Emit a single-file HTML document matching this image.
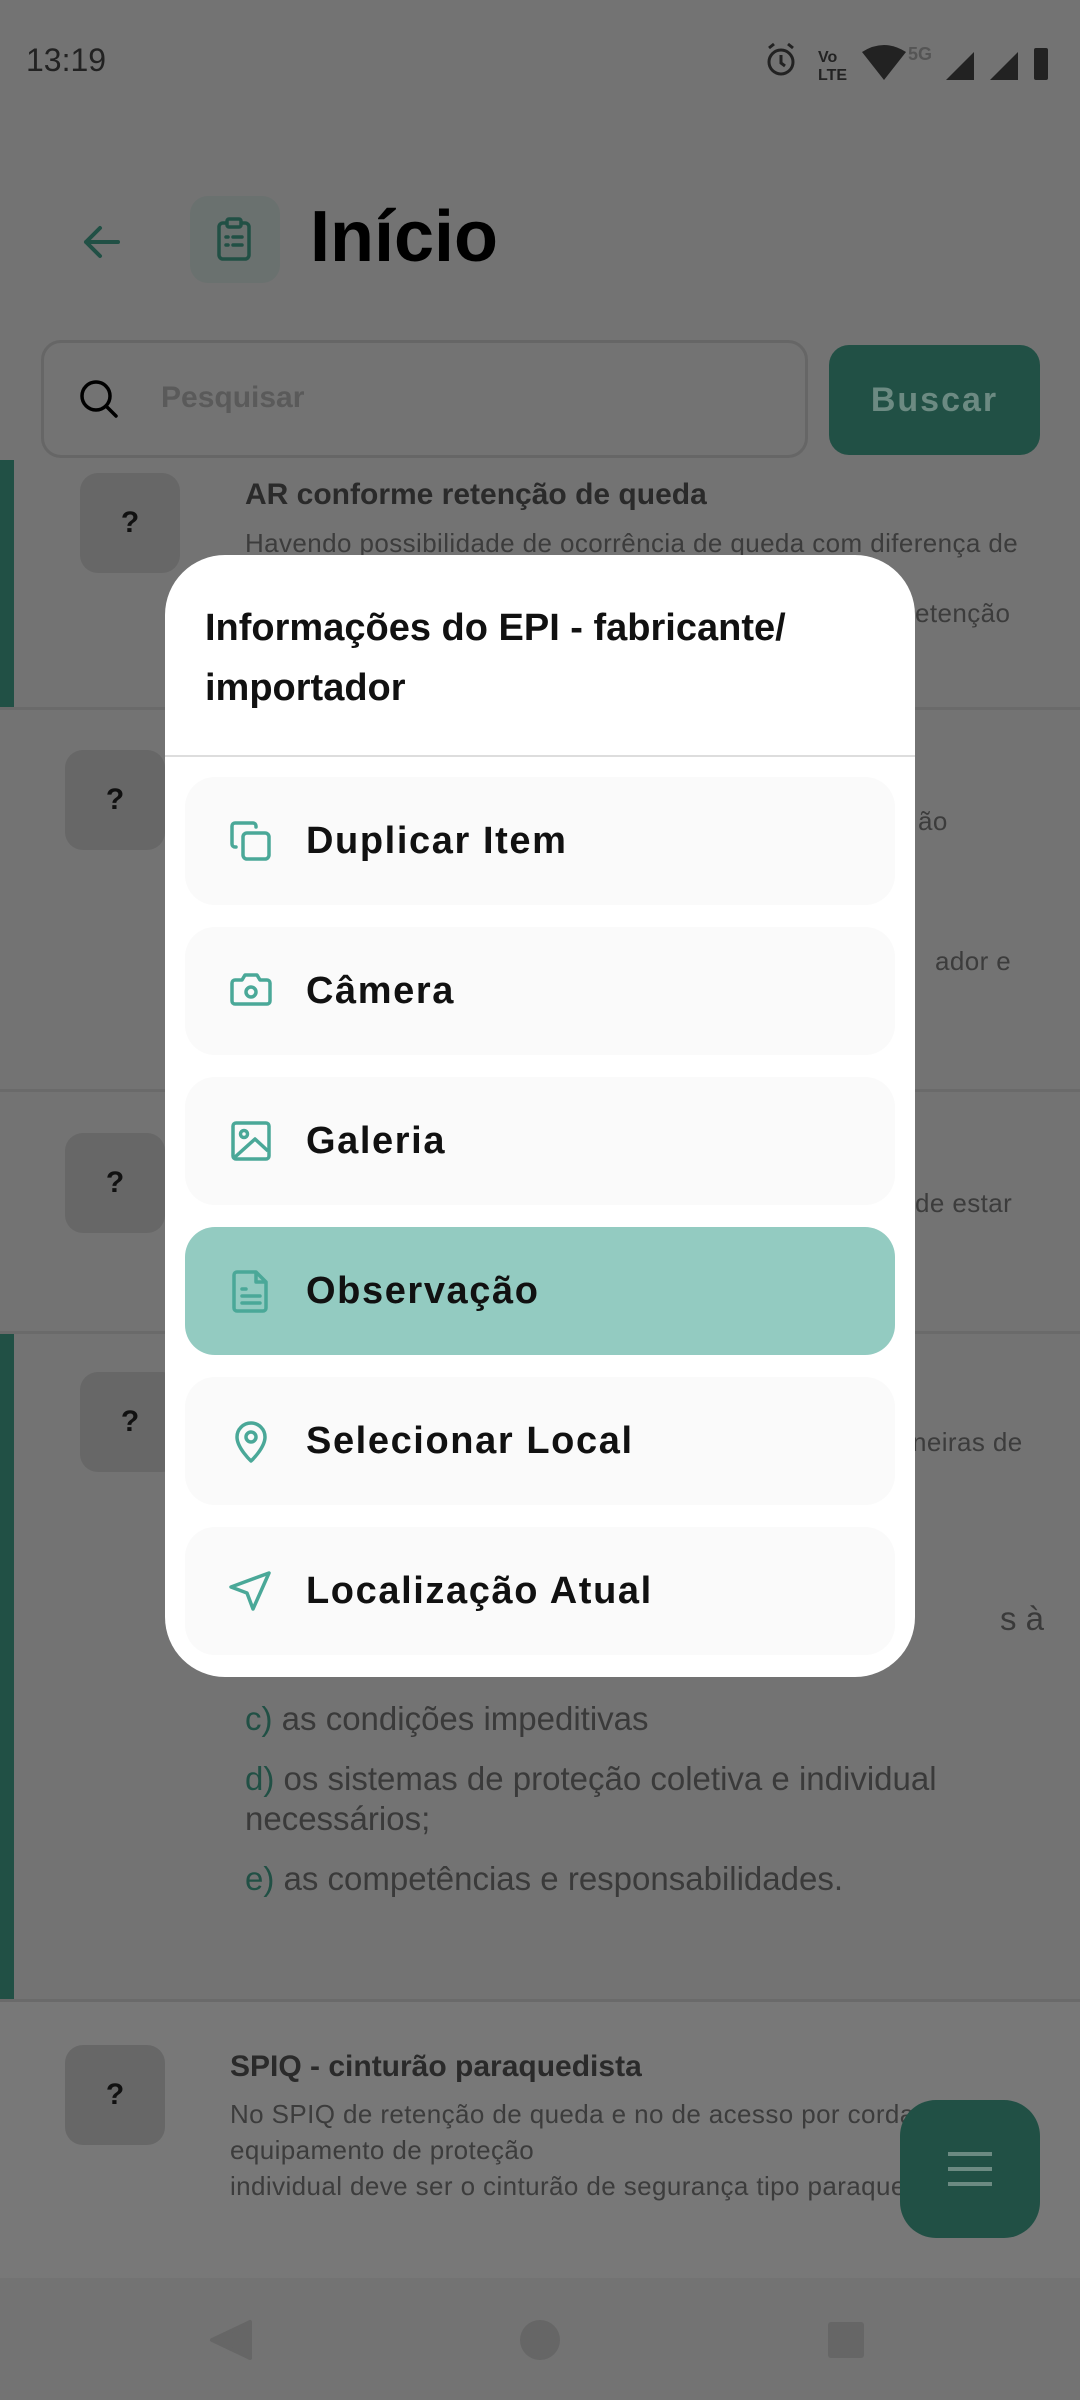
<!DOCTYPE html>
<html><head><meta charset="utf-8"><style>
*{margin:0;padding:0;box-sizing:border-box}
body{width:1080px;height:2400px;position:relative;overflow:hidden;background:#737373;font-family:"Liberation Sans",sans-serif}
.a{position:absolute;white-space:nowrap}
.q{position:absolute;width:100px;height:100px;border-radius:18px;background:#676767;color:#111;font-weight:bold;font-size:30px;display:flex;align-items:center;justify-content:center}
.t{position:absolute;color:#2a2a2a;font-size:30px;font-weight:bold;white-space:nowrap}
.d{position:absolute;color:#3c3c3c;font-size:26px;letter-spacing:0.4px;line-height:36px;white-space:nowrap}
.big{position:absolute;color:#3a3a3a;font-size:33px;left:245px;white-space:nowrap}
.big b{color:#215045;font-weight:normal}
.line{position:absolute;left:0;width:1080px;height:3px;background:#6a6a6a}
.item{position:absolute;left:185px;width:710px;height:128px;border-radius:30px;background:#fafafa;display:flex;align-items:center}
.item svg{position:absolute;left:42px;top:40px}
.item span{position:absolute;left:121px;font-size:38px;font-weight:bold;color:#111;letter-spacing:1.6px}
</style></head><body>
<div class="a" style="left:26px;top:42px;font-size:32px;color:#222">13:19</div>
<svg class="a" style="left:760px;top:40px" width="300" height="44" viewBox="0 0 300 44">
<circle cx="21" cy="22" r="12" fill="none" stroke="#222" stroke-width="3"/><path d="M21 15v8l4 3M9 8l5-4M33 8l-5-4" stroke="#222" stroke-width="3" fill="none"/>
<text x="58" y="22" font-size="16" font-weight="bold" fill="#222" font-family="Liberation Sans">Vo</text><text x="58" y="40" font-size="16" font-weight="bold" fill="#222" font-family="Liberation Sans">LTE</text>
<path d="M102 12q22-14 44 0l-22 28z" fill="#222"/>
<text x="148" y="20" font-size="18" font-weight="bold" fill="#555" font-family="Liberation Sans">5G</text>
<path d="M186 40l28-28v28z" fill="#222"/><path d="M230 40l28-28v28z" fill="#222"/>
<rect x="274" y="8" width="14" height="32" rx="2" fill="#222"/>
</svg>
<svg class="a" style="left:78px;top:218px" width="48" height="48" viewBox="0 0 48 48"><path d="M40 24H8M22 10L8 24l14 14" stroke="#215045" stroke-width="4" fill="none" stroke-linecap="round" stroke-linejoin="round"/></svg>
<div class="a" style="left:190px;top:196px;width:90px;height:87px;border-radius:18px;background:#6a716f"></div>
<svg class="a" style="left:213px;top:217px" width="44" height="48" viewBox="0 0 44 48"><rect x="6" y="6" width="30" height="36" rx="4" fill="none" stroke="#215045" stroke-width="3.5"/><rect x="14" y="2" width="14" height="8" rx="2" fill="#6a716f" stroke="#215045" stroke-width="3.5"/><path d="M13 20h2M20 20h9M13 28h2M20 28h9" stroke="#215045" stroke-width="3.5" stroke-linecap="round"/></svg>
<div class="a" style="left:310px;top:196px;font-size:72px;font-weight:bold;color:#000">Início</div>
<div class="a" style="left:41px;top:340px;width:767px;height:118px;border:3px solid #666;border-radius:20px"></div>
<svg class="a" style="left:78px;top:378px" width="42" height="42" viewBox="0 0 42 42"><circle cx="18" cy="18" r="14" fill="none" stroke="#000" stroke-width="3.5"/><path d="M28 28l10 10" stroke="#000" stroke-width="3.5" stroke-linecap="round"/></svg>
<div class="a" style="left:161px;top:381px;font-size:30px;font-weight:bold;color:#5a5a5a">Pesquisar</div>
<div class="a" style="left:829px;top:345px;width:211px;height:110px;border-radius:20px;background:#215045;color:#6c8a82;font-size:34px;font-weight:bold;letter-spacing:2px;display:flex;align-items:center;justify-content:center">Buscar</div>

<div class="a" style="left:0;top:460px;width:14px;height:248px;background:#215045"></div>
<div class="a" style="left:0;top:1333px;width:14px;height:667px;background:#215045"></div>
<div class="line" style="top:707px"></div><div class="line" style="top:1089px"></div><div class="line" style="top:1331px"></div><div class="line" style="top:1999px"></div>
<div class="a" style="left:0;top:2002px;width:1080px;height:276px;background:#787878"></div>
<div class="q" style="left:80px;top:473px">?</div>
<div class="q" style="left:65px;top:750px">?</div>
<div class="q" style="left:65px;top:1133px">?</div>
<div class="q" style="left:80px;top:1372px">?</div>
<div class="q" style="left:65px;top:2045px">?</div>
<div class="t" style="left:245px;top:478px">AR conforme retenção de queda</div>
<div class="d" style="left:245px;top:525px">Havendo possibilidade de ocorrência de queda com diferença de</div>
<div class="d" style="left:915px;top:595px">etenção</div>
<div class="d" style="left:918px;top:803px">ão</div>
<div class="d" style="left:935px;top:943px">ador e</div>
<div class="d" style="left:915px;top:1185px">de estar</div>
<div class="d" style="left:912px;top:1424px">neiras de</div>
<div class="big" style="left:1000px;top:1600px">s à</div>
<div class="big" style="top:1700px"><b>c)</b> as condições impeditivas</div>
<div class="big" style="top:1760px"><b>d)</b> os sistemas de proteção coletiva e individual</div>
<div class="big" style="top:1800px">necessários;</div>
<div class="big" style="top:1860px"><b>e)</b> as competências e responsabilidades.</div>
<div class="t" style="left:230px;top:2050px">SPIQ - cinturão paraquedista</div>
<div class="d" style="left:230px;top:2096px">No SPIQ de retenção de queda e no de acesso por corda<br>equipamento de proteção<br>individual deve ser o cinturão de segurança tipo paraquedista</div>
<div class="a" style="left:900px;top:2100px;width:140px;height:138px;border-radius:36px;background:#215045"></div>
<svg class="a" style="left:946px;top:2150px" width="48" height="38"><path d="M2 4h44M2 19h44M2 34h44" stroke="#6c8a82" stroke-width="4"/></svg>
<svg class="a" style="left:200px;top:2310px" width="680" height="60"><path d="M50 12v36L12 30z" fill="#666" stroke="#666" stroke-width="4" stroke-linejoin="round"/><circle cx="340" cy="30" r="20" fill="#666"/><rect x="628" y="12" width="36" height="36" rx="3" fill="#666"/></svg>

<div class="a" style="left:165px;top:555px;width:750px;height:1122px;background:#fff;border-radius:60px"></div>
<div class="a" style="left:205px;top:598px;font-size:38px;font-weight:bold;color:#111;line-height:60px">Informações do EPI - fabricante/<br>importador</div>
<div class="a" style="left:165px;top:755px;width:750px;height:2px;background:#ddd"></div>

<div class="item" style="top:777px"><svg width="48" height="48" viewBox="0 0 48 48" fill="none" stroke="#4aa898" stroke-width="3.5" stroke-linecap="round" stroke-linejoin="round"><rect x="16" y="16" width="26" height="26" rx="4"/><path d="M9 30H8a3 3 0 0 1-3-3V9a3 3 0 0 1 3-3h18a3 3 0 0 1 3 3v1"/></svg><span>Duplicar Item</span></div>
<div class="item" style="top:927px"><svg width="48" height="48" viewBox="0 0 48 48" fill="none" stroke="#4aa898" stroke-width="3.5" stroke-linejoin="round"><path d="M5 16a3 3 0 0 1 3-3h7l3-5h12l3 5h7a3 3 0 0 1 3 3v18a3 3 0 0 1-3 3H8a3 3 0 0 1-3-3z"/><circle cx="24" cy="25" r="5"/></svg><span>Câmera</span></div>
<div class="item" style="top:1077px"><svg width="48" height="48" viewBox="0 0 48 48" fill="none" stroke="#4aa898" stroke-width="3.5" stroke-linejoin="round"><rect x="6" y="6" width="36" height="36" rx="3"/><circle cx="17" cy="17" r="3.5"/><path d="M8 40l20-18 13 12"/></svg><span>Galeria</span></div>
<div class="item" style="top:1227px;background:#93cbc1"><svg width="48" height="48" viewBox="0 0 48 48" fill="none" stroke="#4aa898" stroke-width="3.5" stroke-linejoin="round" stroke-linecap="round"><path d="M10 5h19l10 10v26a3 3 0 0 1-3 3H10a3 3 0 0 1-3-3V8a3 3 0 0 1 3-3zM29 5v10h10M15 22h4M15 29h18M15 36h18"/></svg><span>Observação</span></div>
<div class="item" style="top:1377px"><svg width="48" height="48" viewBox="0 0 48 48" fill="none" stroke="#4aa898" stroke-width="3.5" stroke-linejoin="round"><path d="M24 44s14-13 14-24a14 14 0 0 0-28 0c0 11 14 24 14 24z"/><circle cx="24" cy="20" r="5"/></svg><span>Selecionar Local</span></div>
<div class="item" style="top:1527px"><svg width="48" height="48" viewBox="0 0 48 48" fill="none" stroke="#4aa898" stroke-width="3.5" stroke-linejoin="round"><path d="M42 6L4 20l16 6 6 16z"/></svg><span>Localização Atual</span></div>
</body></html>
